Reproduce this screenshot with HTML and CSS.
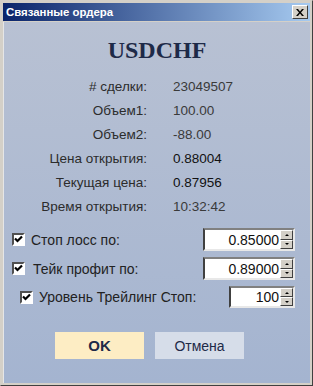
FILE: index.html
```html
<!DOCTYPE html>
<html lang="ru">
<head>
    <meta charset="UTF-8">
    <title>Связанные ордера</title>
    <link rel="stylesheet" href="styles.css">
</head>
<body>
<div class="window">
    <div class="titlebar">
        <span class="title">Связанные ордера</span>
        <span class="close">
            <svg width="8" height="7" viewBox="0 0 8 7"><path d="M0 0h2l2 2.5L6 0h2L5 3.5 8 7H6L4 4.5 2 7H0l3-3.5z" fill="#000"/></svg>
        </span>
    </div>
    <div class="client">
        <h1 class="symbol">USDCHF</h1>
        <div class="info">
            <span class="lbl"># сделки:</span><span class="val">23049507</span>
            <span class="lbl">Объем1:</span><span class="val">100.00</span>
            <span class="lbl">Объем2:</span><span class="val">-88.00</span>
            <span class="lbl">Цена открытия:</span><span class="val dark">0.88004</span>
            <span class="lbl">Текущая цена:</span><span class="val dark">0.87956</span>
            <span class="lbl">Время открытия:</span><span class="val">10:32:42</span>
        </div>
        <div class="opt opt-sl">
            <span class="check"><svg width="9" height="9" viewBox="0 0 9 9"><path d="M1 3.5l2.5 2.5L8 1.5" stroke="#000" stroke-width="2.2" fill="none"/></svg></span>
            <span class="opt-text">Стоп лосс по:</span>
            <div class="spin"><span class="spin-val">0.85000</span><span class="spin-btns"><span class="sb"><i class="up"></i></span><span class="sb"><i class="down"></i></span></span></div>
        </div>
        <div class="opt opt-tp">
            <span class="check"><svg width="9" height="9" viewBox="0 0 9 9"><path d="M1 3.5l2.5 2.5L8 1.5" stroke="#000" stroke-width="2.2" fill="none"/></svg></span>
            <span class="opt-text">Тейк профит по:</span>
            <div class="spin"><span class="spin-val">0.89000</span><span class="spin-btns"><span class="sb"><i class="up"></i></span><span class="sb"><i class="down"></i></span></span></div>
        </div>
        <div class="opt opt-tr">
            <span class="check"><svg width="9" height="9" viewBox="0 0 9 9"><path d="M1 3.5l2.5 2.5L8 1.5" stroke="#000" stroke-width="2.2" fill="none"/></svg></span>
            <span class="opt-text">Уровень Трейлинг Стоп:</span>
            <div class="spin small"><span class="spin-val">100</span><span class="spin-btns"><span class="sb"><i class="up"></i></span><span class="sb"><i class="down"></i></span></span></div>
        </div>
        <div class="buttons">
            <span class="btn ok">OK</span>
            <span class="btn cancel">Отмена</span>
        </div>
    </div>
</div>
</body>
</html>
```

FILE: styles.css
```css
*{
    margin:0;
    padding:0;
    box-sizing:border-box;
}
body{
    background:#d4d0c8;
    font-family:"Liberation Sans", Arial, sans-serif;
}
.window{
    width:313px;
    height:386px;
    border:1px solid;
    border-color:#d4d0c8 #404040 #404040 #d4d0c8;
    background:#d4d0c8;
    display:flex;
    flex-direction:column;
}
.window > .titlebar{
    margin:2px 2px 0 2px;
}
.titlebar{
    height:18px;
    background:linear-gradient(to right, #0a246a, #a6caf0);
    display:flex;
    align-items:center;
    justify-content:space-between;
    padding:0 2px 0 3px;
}
.title{
    color:#fff;
    font:bold 11.4px "Liberation Sans", Arial, sans-serif;
}
.close{
    width:16px;
    height:14px;
    background:#d4d0c8;
    border:1px solid;
    border-color:#fff #404040 #404040 #fff;
    display:flex;
    align-items:center;
    justify-content:center;
}
.client{
    flex:1;
    margin:1px 2px 2px 2px;
    background:linear-gradient(to bottom, #b8c1d3, #a4b4d0);
    padding-top:14px;
    border-left:1px solid #e6e6e6;
}
.symbol{
    font:bold 24px/28px "Liberation Serif", serif;
    text-align:center;
    color:#1e2a48;
}
.info{
    display:grid;
    grid-template-columns:143px 1fr;
    column-gap:26px;
    grid-auto-rows:24px;
    margin-top:10px;
    font-size:13.5px;
    color:#333;
    align-items:center;
}
.lbl{
    text-align:right;
    color:#2c2c2c;
}
.val{
    color:#3a3a3a;
}
.val.dark{
    color:#111;
}
.opt{
    display:flex;
    align-items:center;
    height:23px;
    padding-right:15px;
    font-size:14px;
    color:#222;
}
.opt-sl{
    margin-top:10px;
    padding-left:8px;
}
.opt-tp{
    margin-top:6px;
    padding-left:8px;
}
.opt-tr{
    margin-top:6px;
    height:22px;
    padding-left:16px;
}
.check{
    width:13px;
    height:13px;
    background:#fff;
    border:2px solid;
    border-color:#505050 #fff #fff #505050;
    display:flex;
    align-items:center;
    justify-content:center;
    margin-right:6px;
}
.opt-tp .opt-text{
    margin-left:2px;
}
.spin{
    margin-left:auto;
    width:92px;
    height:100%;
    background:#fff;
    border:2px solid;
    border-color:#808080 #e8e8e8 #e8e8e8 #404040;
    display:flex;
    align-items:center;
    justify-content:flex-end;
    color:#111;
}
.spin.small{
    width:66px;
}
.spin-val{
    font-size:14px;
    padding-right:1px;
}
.spin-btns{
    width:13px;
    height:100%;
    display:flex;
    flex-direction:column;
}
.sb{
    flex:1;
    background:#d4d0c8;
    border:1px solid;
    border-color:#fff #404040 #404040 #fff;
    display:flex;
    align-items:center;
    justify-content:center;
}
.sb i{
    width:0;
    height:0;
    border-left:2px solid transparent;
    border-right:2px solid transparent;
}
.sb i.up{
    border-bottom:2px solid #000;
}
.sb i.down{
    border-top:2px solid #000;
}
.buttons{
    display:flex;
    gap:11px;
    margin-top:24px;
    padding-left:51px;
}
.btn{
    width:89px;
    height:27px;
    display:flex;
    align-items:center;
    justify-content:center;
    font-size:14px;
    color:#1e2a48;
}
.ok{
    background:#fdedc4;
    font-weight:bold;
    font-size:15px;
}
.cancel{
    background:#d6dde9;
}
```
